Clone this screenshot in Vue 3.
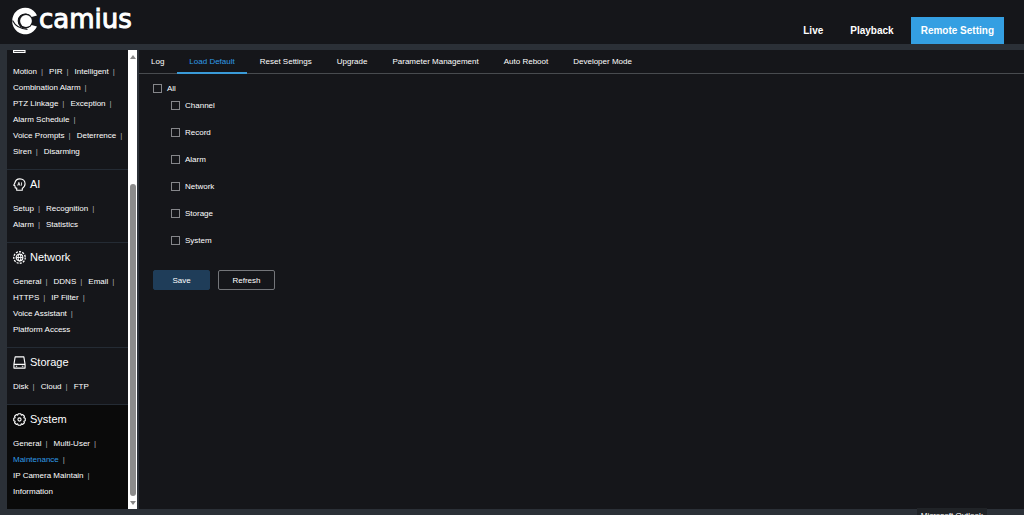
<template>
  <div class="page">
    <header class="header">
      <a class="logo" href="#" aria-label="camius">
        <svg class="logo-mark" viewBox="0 0 27 28" width="27" height="28">
          <path d="M25 8.500A13 13.300 0 1 0 25 19.500L19.500 18A7.500 7.500 0 1 1 19.500 10Z" fill="#fff" />
          <circle cx="13.500" cy="14" r="7.300" fill="#15161a" />
          <path d="M.5 13.500C3 18.500 8 22 15.500 22.300" fill="none" stroke="#15161a" stroke-width="1.200" />
          <circle cx="14" cy="14" r="5.900" fill="#fff" />
        </svg>
        <span class="logo-text">camius</span>
      </a>
      <nav class="top-nav">
        <a
          v-for="item in topNav"
          :key="item"
          href="#"
          class="top-link"
          :class="{ active: item === activeTop }"
          @click.prevent="activeTop = item"
        >{{ item }}</a>
      </nav>
    </header>

    <div class="body">
      <aside class="sidebar">
        <div class="menu">
          <section
            v-for="section in sections"
            :key="section.name"
            class="menu-section"
            :class="{ current: section.name === 'System', cut: section.name === 'Alarm' }"
          >
            <svg v-if="section.name === 'Alarm'" class="cut-icon" viewBox="0 0 14 3" width="14" height="3">
              <path d="M.6 0V2.400H12V0M.6 .5H12" fill="none" stroke="#fff" stroke-width="1.100" />
            </svg>
            <h2 v-else class="menu-title">
              <svg v-if="section.name === 'AI'" class="menu-icon" viewBox="0 0 14 14" fill="none" stroke="currentColor" stroke-width="1.200">
                <path d="M4 13.200V10.900L2.400 10.700 2.100 8.400 .8 7.700 2 5.500C2.400 2.700 4.500 .9 7.400 .9 10.700 .9 13 3.200 13 6.300 13 8.600 11.700 10.200 10 11.200V13.200H4Z" stroke-linejoin="round" />
                <path d="M5 8.200L6.300 4.700 7.600 8.200M5.500 7.200H7.200M9.200 4.700V8.200" stroke-width=".9" />
              </svg>
              <svg v-else-if="section.name === 'Network'" class="menu-icon" viewBox="0 0 14 14" fill="none" stroke="currentColor">
                <circle cx="7" cy="7" r="6.200" stroke-width="1.400" stroke-dasharray="2.200 1.300" />
                <circle cx="7" cy="7" r="3.600" stroke-width="1.200" />
                <ellipse cx="7" cy="7" rx="1.500" ry="3.600" stroke-width="1" />
                <path d="M3.400 7H10.600" stroke-width="1" />
              </svg>
              <svg v-else-if="section.name === 'Storage'" class="menu-icon" viewBox="0 0 14 14" fill="none" stroke="currentColor" stroke-width="1.200" stroke-linejoin="round">
                <path d="M1 9L2.300 1H11.700L13 9M1 9V13H13V9Z" />
                <path d="M3 11.100H4.500M9.500 11.100H11.200" />
              </svg>
              <svg v-else class="menu-icon" viewBox="0 0 14 14" fill="none" stroke="currentColor" stroke-width="1.200" stroke-linejoin="round">
                <path d="M5.700 .8H8.300L8.900 2.300 10.500 1.700 12.300 3.500 11.700 5.100 13.200 5.700V8.300L11.700 8.900 12.300 10.500 10.500 12.300 8.900 11.700 8.300 13.200H5.700L5.100 11.700 3.500 12.300 1.700 10.500 2.300 8.900 .8 8.300V5.700L2.300 5.100 1.700 3.500 3.500 1.700 5.100 2.300Z" />
                <circle cx="7" cy="7" r="1.700" />
              </svg>
              {{ section.name }}
            </h2>
            <ul class="menu-list">
              <li v-for="(link, i) in section.links" :key="link">
                <a href="#" :class="{ selected: link === 'Maintenance' }">{{ link }}</a>
                <span v-if="i < section.links.length - 1" class="sep">|</span>
              </li>
            </ul>
          </section>
        </div>
        <div class="scrollbar">
          <span class="arrow up"></span>
          <div class="track">
            <div class="thumb"></div>
          </div>
          <span class="arrow down"></span>
        </div>
      </aside>

      <main class="content">
        <nav class="tabs">
          <button
            v-for="tab in tabs"
            :key="tab"
            type="button"
            class="tab"
            :class="{ active: tab === activeTab }"
            @click="activeTab = tab"
          >{{ tab }}</button>
        </nav>
        <form class="defaults" @submit.prevent>
          <label class="check all">
            <input v-model="allChecked" type="checkbox">
            All
          </label>
          <div class="options">
            <label v-for="option in options" :key="option" class="check">
              <input v-model="checked" type="checkbox" :value="option">
              {{ option }}
            </label>
          </div>
          <div class="actions">
            <button type="submit" class="btn btn-save">Save</button>
            <button type="button" class="btn btn-refresh" @click="checked = []">Refresh</button>
          </div>
        </form>
      </main>
    </div>

    <div class="taskbar-tip">Microsoft Outlook</div>
  </div>
</template>

<script setup>
import { computed, ref } from 'vue'

const topNav = ['Live', 'Playback', 'Remote Setting']
const activeTop = ref('Remote Setting')

const sections = [
  {
    name: 'Alarm',
    links: ['Motion', 'PIR', 'Intelligent', 'Combination Alarm', 'PTZ Linkage', 'Exception', 'Alarm Schedule', 'Voice Prompts', 'Deterrence', 'Siren', 'Disarming']
  },
  { name: 'AI', links: ['Setup', 'Recognition', 'Alarm', 'Statistics'] },
  {
    name: 'Network',
    links: ['General', 'DDNS', 'Email', 'HTTPS', 'IP Filter', 'Voice Assistant', 'Platform Access']
  },
  { name: 'Storage', links: ['Disk', 'Cloud', 'FTP'] },
  {
    name: 'System',
    links: ['General', 'Multi-User', 'Maintenance', 'IP Camera Maintain', 'Information']
  }
]

const tabs = ['Log', 'Load Default', 'Reset Settings', 'Upgrade', 'Parameter Management', 'Auto Reboot', 'Developer Mode']
const activeTab = ref('Load Default')

const options = ['Channel', 'Record', 'Alarm', 'Network', 'Storage', 'System']
const checked = ref([])

const allChecked = computed({
  get: () => checked.value.length === options.length,
  set: (value) => {
    checked.value = value ? [...options] : []
  }
})
</script>

<style>
body {
  background: #2b3037;
}
</style>

<style scoped>
.page {
  position: relative;
  display: flex;
  flex-direction: column;
  height: 100vh;
  overflow: hidden;
  background: #2b3037;
  color: #fff;
  font-family: "Liberation Sans", Arial, sans-serif;
  font-size: 8px;
}

.page *,
.page {
  box-sizing: border-box;
}

a {
  color: inherit;
  text-decoration: none;
}

button {
  font: inherit;
  color: inherit;
  cursor: pointer;
}

/* Header */
.header {
  display: flex;
  justify-content: space-between;
  flex: none;
  height: 44px;
  padding: 0 20px 0 12px;
  background: #15161a;
}

.logo {
  display: flex;
  align-items: center;
  height: 41px;
}

.logo-text {
  padding-bottom: 4px;
  font-family: "DejaVu Sans", sans-serif;
  font-size: 26px;
  line-height: 32px;
  -webkit-text-stroke: 1px #fff;
}

.top-nav {
  display: flex;
  align-items: flex-end;
  gap: 7px;
}

.top-link {
  padding: 0 10px;
  font-size: 10px;
  font-weight: bold;
  line-height: 27px;
}

.top-link.active {
  background: #349fe2;
}

/* Sidebar */
.body {
  display: flex;
  flex: 1;
  min-height: 0;
  padding: 6px 0 6px 7px;
}

.sidebar {
  display: flex;
  flex: none;
  margin-right: 2px;
}

.menu {
  display: flex;
  flex-direction: column;
  width: 121px;
  overflow: hidden;
  background: #15161a;
}

.menu-section {
  flex: none;
  padding: 4px 0 9px 6px;
  border-top: 1px solid #242b34;
}

.menu-section.cut {
  padding-top: 0;
  border-top: none;
}

.menu-section.current {
  flex: 1 0 auto;
  background: #0a0a0a;
}

.cut-icon {
  display: block;
  margin-bottom: 11px;
}

.menu-title {
  display: flex;
  align-items: center;
  gap: 4px;
  margin: 0 0 7px;
  font-size: 11px;
  font-weight: normal;
  line-height: 20px;
}

.menu-icon {
  width: 13px;
  height: 13px;
}

/* the trailing separator's margin may run past the edge */
.menu-list {
  display: flex;
  flex-wrap: wrap;
  margin: 0 -2px 0 0;
  padding: 0;
  list-style: none;
  line-height: 16px;
}

.menu-list li {
  display: flex;
  white-space: nowrap;
}

.sep {
  margin: 0 6px 0 4px;
  color: #aaa;
}

.selected {
  color: #2f9be6;
}

.scrollbar {
  display: flex;
  flex-direction: column;
  align-items: center;
  justify-content: space-between;
  width: 9px;
  padding: 5px 0 4px;
  background: #fff;
}

.arrow {
  border: 3px solid transparent;
}

.arrow.up {
  border-top: none;
  border-bottom: 4px solid #888;
}

.arrow.down {
  border-bottom: none;
  border-top: 4px solid #888;
}

.track {
  display: flex;
  flex: 1;
  flex-direction: column;
  justify-content: flex-end;
  padding: 4px 0 5px;
}

.thumb {
  width: 6px;
  height: 72%;
  border-radius: 3px;
  background: #8b8b8b;
}

/* Content */
.content {
  flex: 1;
  min-width: 0;
  background: #15161a;
}

.tabs {
  display: flex;
  gap: 1px;
  height: 24px;
  border-bottom: 1px solid #484b4f;
}

.tab {
  height: 24px;
  padding: 0 12px;
  border: none;
  border-bottom: 2px solid transparent;
  background: none;
  white-space: nowrap;
}

.tab.active {
  border-bottom-color: #3a9bd8;
  color: #2f9be6;
}

.defaults {
  padding: 6px 14px;
}

.check {
  display: flex;
  align-items: center;
  gap: 5px;
  width: max-content;
  height: 18px;
}

.check.all {
  height: 16px;
}

.check input {
  appearance: none;
  width: 9px;
  height: 9px;
  margin: 0;
  border: 1px solid #85868a;
}

.check input:checked {
  background: #349fe2;
}

.options {
  display: flex;
  flex-direction: column;
  gap: 9px;
  padding-left: 18px;
}

.actions {
  display: flex;
  gap: 8px;
  margin-top: 21px;
}

.btn {
  width: 57px;
  height: 20px;
  padding: 0;
  border: 1px solid #74767a;
  border-radius: 2px;
  background: none;
}

.btn-save {
  border-color: #1f3d59;
  background: #1f3d59;
}

.taskbar-tip {
  position: absolute;
  right: 37px;
  bottom: 0;
  height: 7px;
  padding: 3px 4px 0;
  overflow: hidden;
  background: #202327;
  line-height: 10px;
  white-space: nowrap;
}
</style>
